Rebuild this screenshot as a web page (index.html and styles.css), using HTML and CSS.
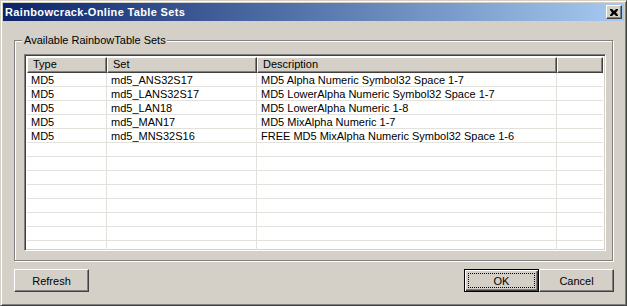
FILE: index.html
```html
<!DOCTYPE html>
<html>
<head>
<meta charset="utf-8">
<link rel="stylesheet" href="styles.css">
</head>
<body>
<div class="window">
  <div class="titlebar">
    <span class="title">Rainbowcrack-Online Table Sets</span>
    <span class="close"><svg width="8" height="7" viewBox="0 0 8 7"><path d="M0 0h2l2 2 2-2h2v1L6 3.5 8 6v1H6L4 5 2 7H0V6l2-2.5L0 1z" fill="#000"/></svg></span>
  </div>
  <div class="body">
    <div class="group">
      <span class="legend">Available RainbowTable Sets</span>
      <div class="listview">
        <div class="header">
          <div class="hcell c1">Type</div>
          <div class="hcell c2">Set</div>
          <div class="hcell c3">Description</div>
          <div class="hcell c4"></div>
        </div>
        <div class="rows">
          <div class="row"><div class="cell c1">MD5</div><div class="cell c2">md5_ANS32S17</div><div class="cell c3">MD5 Alpha Numeric Symbol32 Space 1-7</div><div class="cell c4"></div></div>
          <div class="row"><div class="cell c1">MD5</div><div class="cell c2">md5_LANS32S17</div><div class="cell c3">MD5 LowerAlpha Numeric Symbol32 Space 1-7</div><div class="cell c4"></div></div>
          <div class="row"><div class="cell c1">MD5</div><div class="cell c2">md5_LAN18</div><div class="cell c3">MD5 LowerAlpha Numeric 1-8</div><div class="cell c4"></div></div>
          <div class="row"><div class="cell c1">MD5</div><div class="cell c2">md5_MAN17</div><div class="cell c3">MD5 MixAlpha Numeric 1-7</div><div class="cell c4"></div></div>
          <div class="row"><div class="cell c1">MD5</div><div class="cell c2">md5_MNS32S16</div><div class="cell c3">FREE MD5 MixAlpha Numeric Symbol32 Space 1-6</div><div class="cell c4"></div></div>
          <div class="row"><div class="cell c1"></div><div class="cell c2"></div><div class="cell c3"></div><div class="cell c4"></div></div>
          <div class="row"><div class="cell c1"></div><div class="cell c2"></div><div class="cell c3"></div><div class="cell c4"></div></div>
          <div class="row"><div class="cell c1"></div><div class="cell c2"></div><div class="cell c3"></div><div class="cell c4"></div></div>
          <div class="row"><div class="cell c1"></div><div class="cell c2"></div><div class="cell c3"></div><div class="cell c4"></div></div>
          <div class="row"><div class="cell c1"></div><div class="cell c2"></div><div class="cell c3"></div><div class="cell c4"></div></div>
          <div class="row"><div class="cell c1"></div><div class="cell c2"></div><div class="cell c3"></div><div class="cell c4"></div></div>
          <div class="row"><div class="cell c1"></div><div class="cell c2"></div><div class="cell c3"></div><div class="cell c4"></div></div>
          <div class="row"><div class="cell c1"></div><div class="cell c2"></div><div class="cell c3"></div><div class="cell c4"></div></div>
        </div>
      </div>
    </div>
    <div class="buttons">
      <button class="btn">Refresh</button>
      <span class="spacer"></span>
      <button class="btn default"><span class="focus">OK</span></button>
      <button class="btn">Cancel</button>
    </div>
  </div>
</div>
</body>
</html>
```

FILE: styles.css
```css
* { box-sizing: border-box; }
html, body { margin: 0; padding: 0; background: #d4d0c8; }
body {
  font-family: "Liberation Sans", Arial, sans-serif;
  font-size: 11px;
  color: #000;
}
.window {
  width: 627px;
  height: 306px;
  background: #d4d0c8;
  border: 1px solid;
  border-color: #d4d0c8 #404040 #404040 #d4d0c8;
  box-shadow: inset 1px 1px 0 #fff, inset -1px -1px 0 #808080;
  padding: 2px;
  display: flex;
  flex-direction: column;
}
.titlebar {
  height: 18px;
  background: linear-gradient(to right, #0a246a, #a6caf0);
  display: flex;
  align-items: center;
  padding: 0 2px 0 2px;
}
.title {
  color: #fff;
  font-weight: bold;
  font-size: 11px;
  flex: 1;
  letter-spacing: 0.35px;
}
.close {
  width: 16px;
  height: 14px;
  background: #d4d0c8;
  border: 1px solid;
  border-color: #fff #404040 #404040 #fff;
  box-shadow: inset -1px -1px 0 #808080;
  display: flex;
  align-items: center;
  justify-content: center;
  padding-right: 1px;
}
.close svg { display: block; }
.body {
  flex: 1;
  display: flex;
  flex-direction: column;
  padding: 0 10px 0 11px;
}
.group {
  margin-top: 19px;
  height: 221px;
  width: 599px;
  border: 1px solid #808080;
  box-shadow: 1px 1px 0 #fff, inset 1px 1px 0 #fff;
  padding: 0 7px 0 9px;
  display: flex;
  flex-direction: column;
}
.legend {
  align-self: flex-start;
  margin-top: -7px;
  margin-left: -2px;
  padding: 0 1px 0 2px;
  background: #d4d0c8;
  line-height: 13px;
}
.listview {
  margin-top: 7px;
  height: 197px;
  width: 582px;
  background: #fff;
  border: 1px solid;
  border-color: #808080 #fff #fff #808080;
  box-shadow: inset 1px 1px 0 #404040, inset -1px -1px 0 #d4d0c8;
  padding: 2px;
  overflow: hidden;
}
.header {
  display: flex;
  height: 16px;
}
.hcell {
  background: #d4d0c8;
  border: 1px solid;
  border-color: #fff #404040 #404040 #fff;
  box-shadow: inset -1px -1px 0 #808080;
  padding-left: 5px;
  line-height: 13px;
  white-space: nowrap;
}
.c1 { width: 80px; }
.c2 { width: 150px; }
.c3 { width: 300px; }
.c4 { flex: 1; }
.row {
  display: flex;
  height: 14px;
}
.cell {
  border-right: 1px solid #e3e1dc;
  border-bottom: 1px solid #e3e1dc;
  padding-left: 4px;
  line-height: 14px;
  white-space: nowrap;
}
.row .c4 { border-right: none; }
.buttons {
  display: flex;
  margin-top: 8px;
  width: 600px;
}
.spacer { flex: 1; }
.btn {
  width: 75px;
  height: 23px;
  font-family: "Liberation Sans", Arial, sans-serif;
  font-size: 11px;
  color: #000;
  background: #d4d0c8;
  border: 1px solid;
  border-color: #fff #404040 #404040 #fff;
  box-shadow: inset -1px -1px 0 #808080;
  padding: 0;
  margin: 0;
}
.btn.default {
  border: 1px solid #000;
  box-shadow: inset 1px 1px 0 #fff, inset -1px -1px 0 #404040, inset -2px -2px 0 #808080;
  padding: 3px;
}
.focus {
  display: flex;
  align-items: center;
  justify-content: center;
  height: 100%;
  outline: 1px dotted #000;
  outline-offset: -1px;
}
```
